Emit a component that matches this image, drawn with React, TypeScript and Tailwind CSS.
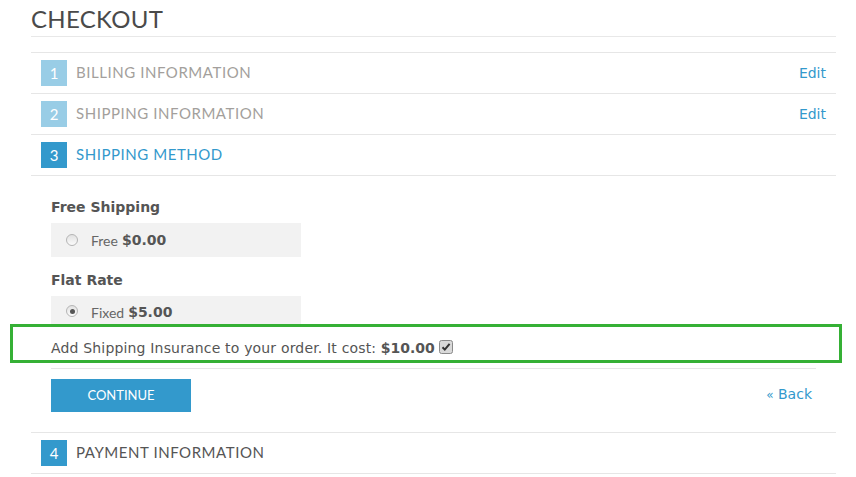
import React from 'react';

const steps = [
    { n: 1, label: 'Billing Information', done: true },
    { n: 2, label: 'Shipping Information', done: true },
    { n: 3, label: 'Shipping Method', active: true },
];

const StepRow = ({ n, label, done, active }: { n: number; label: string; done?: boolean; active?: boolean }) => (
    <div className="h-[41px] border-b border-[#e6e6e6] flex items-center pl-[10px] pr-[10px]">
        <span
            className={`w-[26px] h-[26px] flex items-center justify-center text-white text-[15px] font-['Lato',sans-serif] ${
                active || !done ? 'bg-[#3399cc]' : 'bg-[#99cde6]'
            }`}
        >
            {n}
        </span>
        <span
            className={`ml-[9px] -mt-[1px] uppercase text-[15px] font-['Lato',sans-serif] tracking-[0.55px] ${
                active ? 'text-[#3399cc]' : done ? 'text-[#a39f9c]' : 'text-[#555]'
            }`}
        >
            {label}
        </span>
        {done && (
            <a className="ml-auto text-[14px] text-[#3399cc] font-['DejaVu_Sans',sans-serif]" href="#">
                Edit
            </a>
        )}
    </div>
);

const Radio = ({ checked }: { checked?: boolean }) => (
    <span className="w-[12px] h-[12px] rounded-full border border-[#b5b5b5] bg-gradient-to-b from-[#e2e2e2] to-[#fbfbfb] flex items-center justify-center">
        {checked && <span className="w-[5px] h-[5px] rounded-full bg-[#555]" />}
    </span>
);

const Checkbox = () => (
    <svg width="14" height="14" viewBox="0 0 14 14" className="inline-block ml-[4px] align-[-1px]">
        <rect x="0.5" y="0.5" width="13" height="13" rx="2" fill="#d9d9d9" stroke="#8a8a8a" />
        <path d="M3.5 7.2 L5.8 9.6 L10.6 3.8" fill="none" stroke="#333" strokeWidth="2" />
    </svg>
);

const App = () => {
    return (
        <div className="w-[856px] h-[477px] bg-white overflow-hidden font-['DejaVu_Sans',sans-serif] text-[#555]">
            <div className="ml-[31px] w-[805px]">
                <div className="h-[37px] border-b border-[#e8e8e8] flex items-end pb-[5px]">
                    <h1 className="uppercase text-[24px] leading-none text-[#4a4a4a] font-['Lato',sans-serif] tracking-[0.3px]">
                        Checkout
                    </h1>
                </div>
                <div className="mt-[15px] border-t border-[#e6e6e6]">
                    {steps.map((s) => (
                        <StepRow key={s.n} {...s} />
                    ))}

                    <div className="pl-[20px] pr-[20px]">
                        <div className="pt-[23px] text-[14px] font-bold leading-[16px] text-[#555]">Free Shipping</div>
                        <div className="mt-[8px] w-[250px] h-[34px] bg-[#f2f2f2] flex items-center pl-[15px]">
                            <Radio />
                            <span className="ml-[13px] text-[14px] text-[#666] font-['Lato',sans-serif]">Free</span>
                            <span className="ml-[4px] text-[14px] font-bold text-[#555]">$0.00</span>
                        </div>
                        <div className="pt-[15px] text-[14px] font-bold leading-[16px] text-[#555]">Flat Rate</div>
                        <div className="mt-[8px] w-[250px] h-[28px] bg-[#f2f2f2] flex items-start pt-[9px] pl-[15px]">
                            <Radio checked />
                            <span className="ml-[13px] -mt-[3px] text-[14px] text-[#666] font-['Lato',sans-serif]">Fixed</span>
                            <span className="ml-[4px] -mt-[3px] text-[14px] font-bold text-[#555]">$5.00</span>
                        </div>

                        <div className="ml-[-41px] mr-[-26px] h-[39px] border-[3px] border-[#35b035] pl-[38px] pt-[13px] text-[14px] leading-[17px] text-[#555]">
                            <span className="tracking-[0.17px]">Add Shipping Insurance to your order. It cost:</span> <b>$10.00</b>
                            <Checkbox />
                        </div>

                        <div className="mt-[5px] border-t border-[#e6e6e6] flex items-center justify-between h-[64px] pb-[10px] pr-[4px]">
                            <button className="w-[140px] h-[33px] bg-[#3399cc] text-white uppercase text-[13px] font-['Lato',sans-serif]">
                                Continue
                            </button>
                            <a className="text-[14px] text-[#3399cc] mt-[-2px]" href="#">
                                <span className="text-[12px]">«</span> Back
                            </a>
                        </div>
                    </div>

                    <div className="border-t border-[#e6e6e6]">
                        <StepRow n={4} label="Payment Information" />
                    </div>
                </div>
            </div>
        </div>
    );
};

export default App;
